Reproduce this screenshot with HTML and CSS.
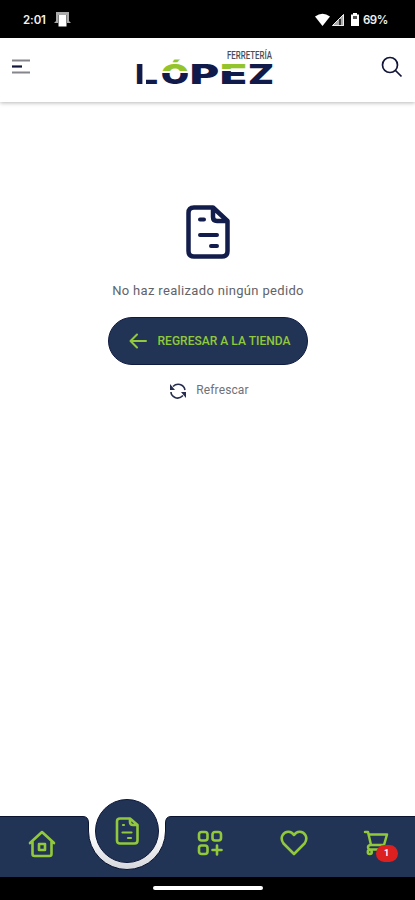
FILE: index.html
```html
<!DOCTYPE html>
<html lang="es">
<head>
<meta charset="utf-8">
<meta name="viewport" content="width=device-width, initial-scale=1">
<title>Ferretería López</title>
<link rel="stylesheet" href="styles.css">
</head>
<body>
<div class="app">
  <div class="status">
    <span class="time">2:01</span>
    <svg class="notice" width="17" height="17" viewBox="0 0 17 17"><path d="M2 1h13v9l2 2h-4V4H4v8H0l2-2z" fill="#aaa"/><path d="M4.500 4h8v11.500h-8z" fill="#fff"/></svg>
    <svg class="signals" width="46" height="16" viewBox="0 0 46 16"><path d="M0 4.500Q7.500-1 15 4.500L7.500 14z" fill="#fff"/><path d="M29 2v12H17z" fill="#aaa"/><path d="M28.500 2.500v11H17.500z" fill="none" stroke="#eee"/><path d="M25 7v6" stroke="#333" stroke-width="2"/><path d="M38 1h4v1.500h2V14h-8V2.500h2z" fill="#fff"/><path d="M38 4h4v3h-4z" fill="#555"/></svg>
    <span class="battery">69%</span>
  </div>
  <header class="header">
    <svg class="menu" width="20" height="18" viewBox="0 0 20 18" fill="none" stroke-width="2.200"><path d="M1 2.500h18M1 14.500h18" stroke="#85858b"/><path d="M1 8.500h10" stroke="#111638"/></svg>
    <svg class="logo" width="140" height="48" viewBox="0 -8 140 48" role="img" aria-label="Ferretería López">
      <defs>
        <linearGradient id="splitO" gradientUnits="userSpaceOnUse" x1="0" y1="0" x2="0" y2="40"><stop offset=".58" stop-color="#93c42c"/><stop offset=".58" stop-color="#fff"/><stop offset=".63" stop-color="#fff"/><stop offset=".63" stop-color="#111b4b"/></linearGradient>
        <linearGradient id="splitE" gradientUnits="userSpaceOnUse" x1="0" y1="0" x2="0" y2="40"><stop offset=".52" stop-color="#93c42c"/><stop offset=".52" stop-color="#fff"/><stop offset=".565" stop-color="#fff"/><stop offset=".565" stop-color="#111b4b"/></linearGradient>
        <clipPath id="accent"><path d="M0 11.500h140v28H0z"/></clipPath>
      </defs>
      <text class="small" x="92" y="10.500" textLength="45" lengthAdjust="spacingAndGlyphs">FERRETERÍA</text>
      <g class="word" clip-path="url(#accent)">
        <text x="0" y="35.500" textLength="23" lengthAdjust="spacingAndGlyphs">L</text>
        <text x="26" y="35.500" textLength="28" lengthAdjust="spacingAndGlyphs" fill="url(#splitO)">Ó</text>
        <text x="55" y="35.500" textLength="29" lengthAdjust="spacingAndGlyphs">P</text>
        <text x="85" y="35.500" textLength="27" lengthAdjust="spacingAndGlyphs" fill="url(#splitE)">E</text>
        <text x="113" y="35.500" textLength="26" lengthAdjust="spacingAndGlyphs">Z</text>
      </g>
      <path d="M9.200 15v22" stroke="#fff" stroke-width="3.600"/>
      <path d="M9 15h4v14H9z" fill="#fff"/>
    </svg>
    <svg class="search" width="22" height="22" viewBox="0 0 22 22" fill="none" stroke="#111638" stroke-width="1.700"><circle cx="9" cy="9" r="7.500"/><path d="m14.500 14.500 6 6"/></svg>
  </header>
  <main class="content">
    <svg class="doc" width="44" height="54" viewBox="0 0 44 54" fill="none" stroke="#121d4c" stroke-width="4.500" stroke-linejoin="round" stroke-linecap="round"><path d="M8 2.500h19L41.500 16v30q0 5.500-5.500 5.500H8q-5.500 0-5.500-5.500V8q0-5.500 5.500-5.500zM27 3v9q0 4 4 4h10"/><path d="M14 14.500h4M14 30h17M25 41h6" stroke-width="4"/></svg>
    <p class="message">No haz realizado ningún pedido</p>
    <button class="back"><svg width="18" height="16" viewBox="0 0 18 16" fill="none" stroke="#92c83c" stroke-width="2" stroke-linecap="round" stroke-linejoin="round"><path d="M17 8H1.500M8 1.500 1.500 8 8 14.500"/></svg><span>REGRESAR A LA TIENDA</span></button>
    <button class="refresh"><svg width="18" height="18" viewBox="0 0 18 18" fill="none" stroke="#262d4f" stroke-width="1.600"><path d="M4 4.500Q7 1.500 11 2.500T16 8M14 13.500Q10 17.500 6 15.500T2 10"/><path d="M1 2v6h5zM17 16v-6h-5z" fill="#262d4f" stroke="none"/></svg><span>Refrescar</span></button>
  </main>
  <nav class="nav">
    <svg class="shape" width="415" height="61" viewBox="0 0 415 61"><defs><linearGradient id="ring" x2="0" y2="1"><stop offset=".3" stop-color="#fff"/><stop offset="1" stop-color="#d5d6dc"/></linearGradient></defs><path d="M80 0h95v54H80z" fill="url(#ring)"/><path d="M-2 .5H83Q88.500.5 88.500 7V15A38.500 38.500 0 0 0 165.500 15V7Q165.500.5 171 .5H417V64H-2z" fill="#223455" stroke="#0b1430"/></svg>
    <a class="item"><svg width="28" height="28" viewBox="0 0 28 28" fill="none" stroke="#92c83c" stroke-width="2.600" stroke-linecap="round" stroke-linejoin="round"><path d="M2 13 14 2l12 11M4.500 11v13q0 2 2 2h15q2 0 2-2V11"/><path d="M11 14h6v6h-6z"/></svg></a>
    <a class="item active"><svg width="24" height="28" viewBox="0 0 24 28" fill="none" stroke="#92c83c" stroke-width="2.600" stroke-linecap="round" stroke-linejoin="round"><path d="M5 1.500h10L22.500 8v15.500q0 3-3 3H5q-3 0-3-3v-19q0-3 3-3zM15 2v3q0 3 3 3h4"/><path d="M8 8h1M7.500 15.500h9M13 21h3" stroke-width="2.200"/></svg></a>
    <a class="item"><svg width="26" height="26" viewBox="0 0 26 26" fill="none" stroke="#92c83c" stroke-width="2.600" stroke-linecap="round"><rect x="2" y="2" width="8.500" height="8.500" rx="2.500"/><rect x="15.500" y="2" width="8.500" height="8.500" rx="2.500"/><rect x="2" y="15.500" width="8.500" height="8.500" rx="2.500"/><path d="M20 15.500v9M15.500 20h9"/></svg></a>
    <a class="item"><svg width="28" height="26" viewBox="0 0 28 26" fill="none" stroke="#92c83c" stroke-width="2.600" stroke-linejoin="round"><path d="M14 24 3.500 13.500C-1 7 4 1.500 8.500 1.700 11.500 1.800 13 3.500 14 5c1-1.500 2.500-3.200 5.500-3.300C24 1.500 29 7 24.500 13.500z"/></svg></a>
    <a class="item cart"><svg width="26" height="26" viewBox="0 0 26 26" fill="none" stroke="#92c83c" stroke-width="2.500" stroke-linecap="round" stroke-linejoin="round"><path d="M2 2h3l3 13h13l3-10.500H6M8 15q-3 0-3 2.300T8 19.500h13"/><circle cx="6.800" cy="22" r="2"/><circle cx="20" cy="22" r="2"/></svg><span class="badge">1</span></a>
  </nav>
  <div class="system"><span class="handle"></span></div>
</div>
</body>
</html>
```
FILE: styles.css
```css
* { box-sizing: border-box; }
body { margin: 0; background: #fff; font-family: Roboto, "Liberation Sans", sans-serif; }
svg { display: block; flex: none; }
button { border: 0; background: none; font: inherit; padding: 0; display: flex; align-items: center; }
.app { width: 415px; height: 900px; display: flex; flex-direction: column; overflow: hidden; }
.status { height: 38px; flex: none; background: #000; color: #f2f2f2; display: flex; align-items: center; padding: 1px 28px 0 23px; font: 600 11.500px Inter, sans-serif; }
.time { width: 24px; white-space: nowrap; letter-spacing: -.1px; }
.notice { margin-left: 7px; }
.signals { margin-left: auto; margin-right: 2px; }
.battery { width: 24px; white-space: nowrap; letter-spacing: -.5px; }
.header { height: 64px; flex: none; display: flex; align-items: flex-start; padding: 0 13px 0 11px; background: #fff; box-shadow: 0 1px 4px rgba(0,0,0,.28); }
.menu { margin-top: 20px; }
.logo { margin: 2px 0 0 104px; overflow: visible; }
.small { font: 500 10.500px Roboto, sans-serif; fill: #4a4d58; }
.word { font: 900 26.500px Inter, sans-serif; fill: #111b4b; }
.search { margin: 18px -1px 0 auto; }
.content { flex: 1; display: flex; flex-direction: column; align-items: center; padding-top: 103px; }
.message { margin: 22.500px 0 0 1px; font-size: 13px; line-height: 18px; letter-spacing: .33px; color: #626368; }
.back { margin-top: 17.500px; width: 200px; height: 48px; border-radius: 24px; background: #223455; border: 1px solid #101b42; color: #92c83c; font-size: 12px; font-weight: 500; padding-left: 20px; gap: 11px; white-space: nowrap; letter-spacing: .03px; }
.refresh { margin: 17px 0 0 3px; gap: 9px; font-size: 12px; color: #707177; letter-spacing: .12px; }
.refresh span { margin-top: -3px; }
.nav { position: relative; height: 61px; flex: none; display: grid; grid-template-columns: 84px 83.500px 84px 84px 80px; }
.shape { position: absolute; left: 0; top: 0; overflow: hidden; }
.item { position: relative; display: flex; justify-content: center; padding-top: 14px; }
.active { width: 64px; height: 64px; margin: -17px 0 0 11px; padding: 0; align-items: center; border-radius: 50%; background: #223455; border: 1px solid #0d1739; }
.badge { position: absolute; left: 40px; top: 29px; width: 22px; height: 17px; border-radius: 9px; background: #dc2020; color: #fff; font-size: 9px; font-weight: 700; line-height: 17px; text-align: center; }
.system { height: 23px; flex: none; background: #000; display: flex; justify-content: center; padding-top: 9px; }
.handle { width: 110px; height: 4px; border-radius: 2px; background: #fff; }
```
